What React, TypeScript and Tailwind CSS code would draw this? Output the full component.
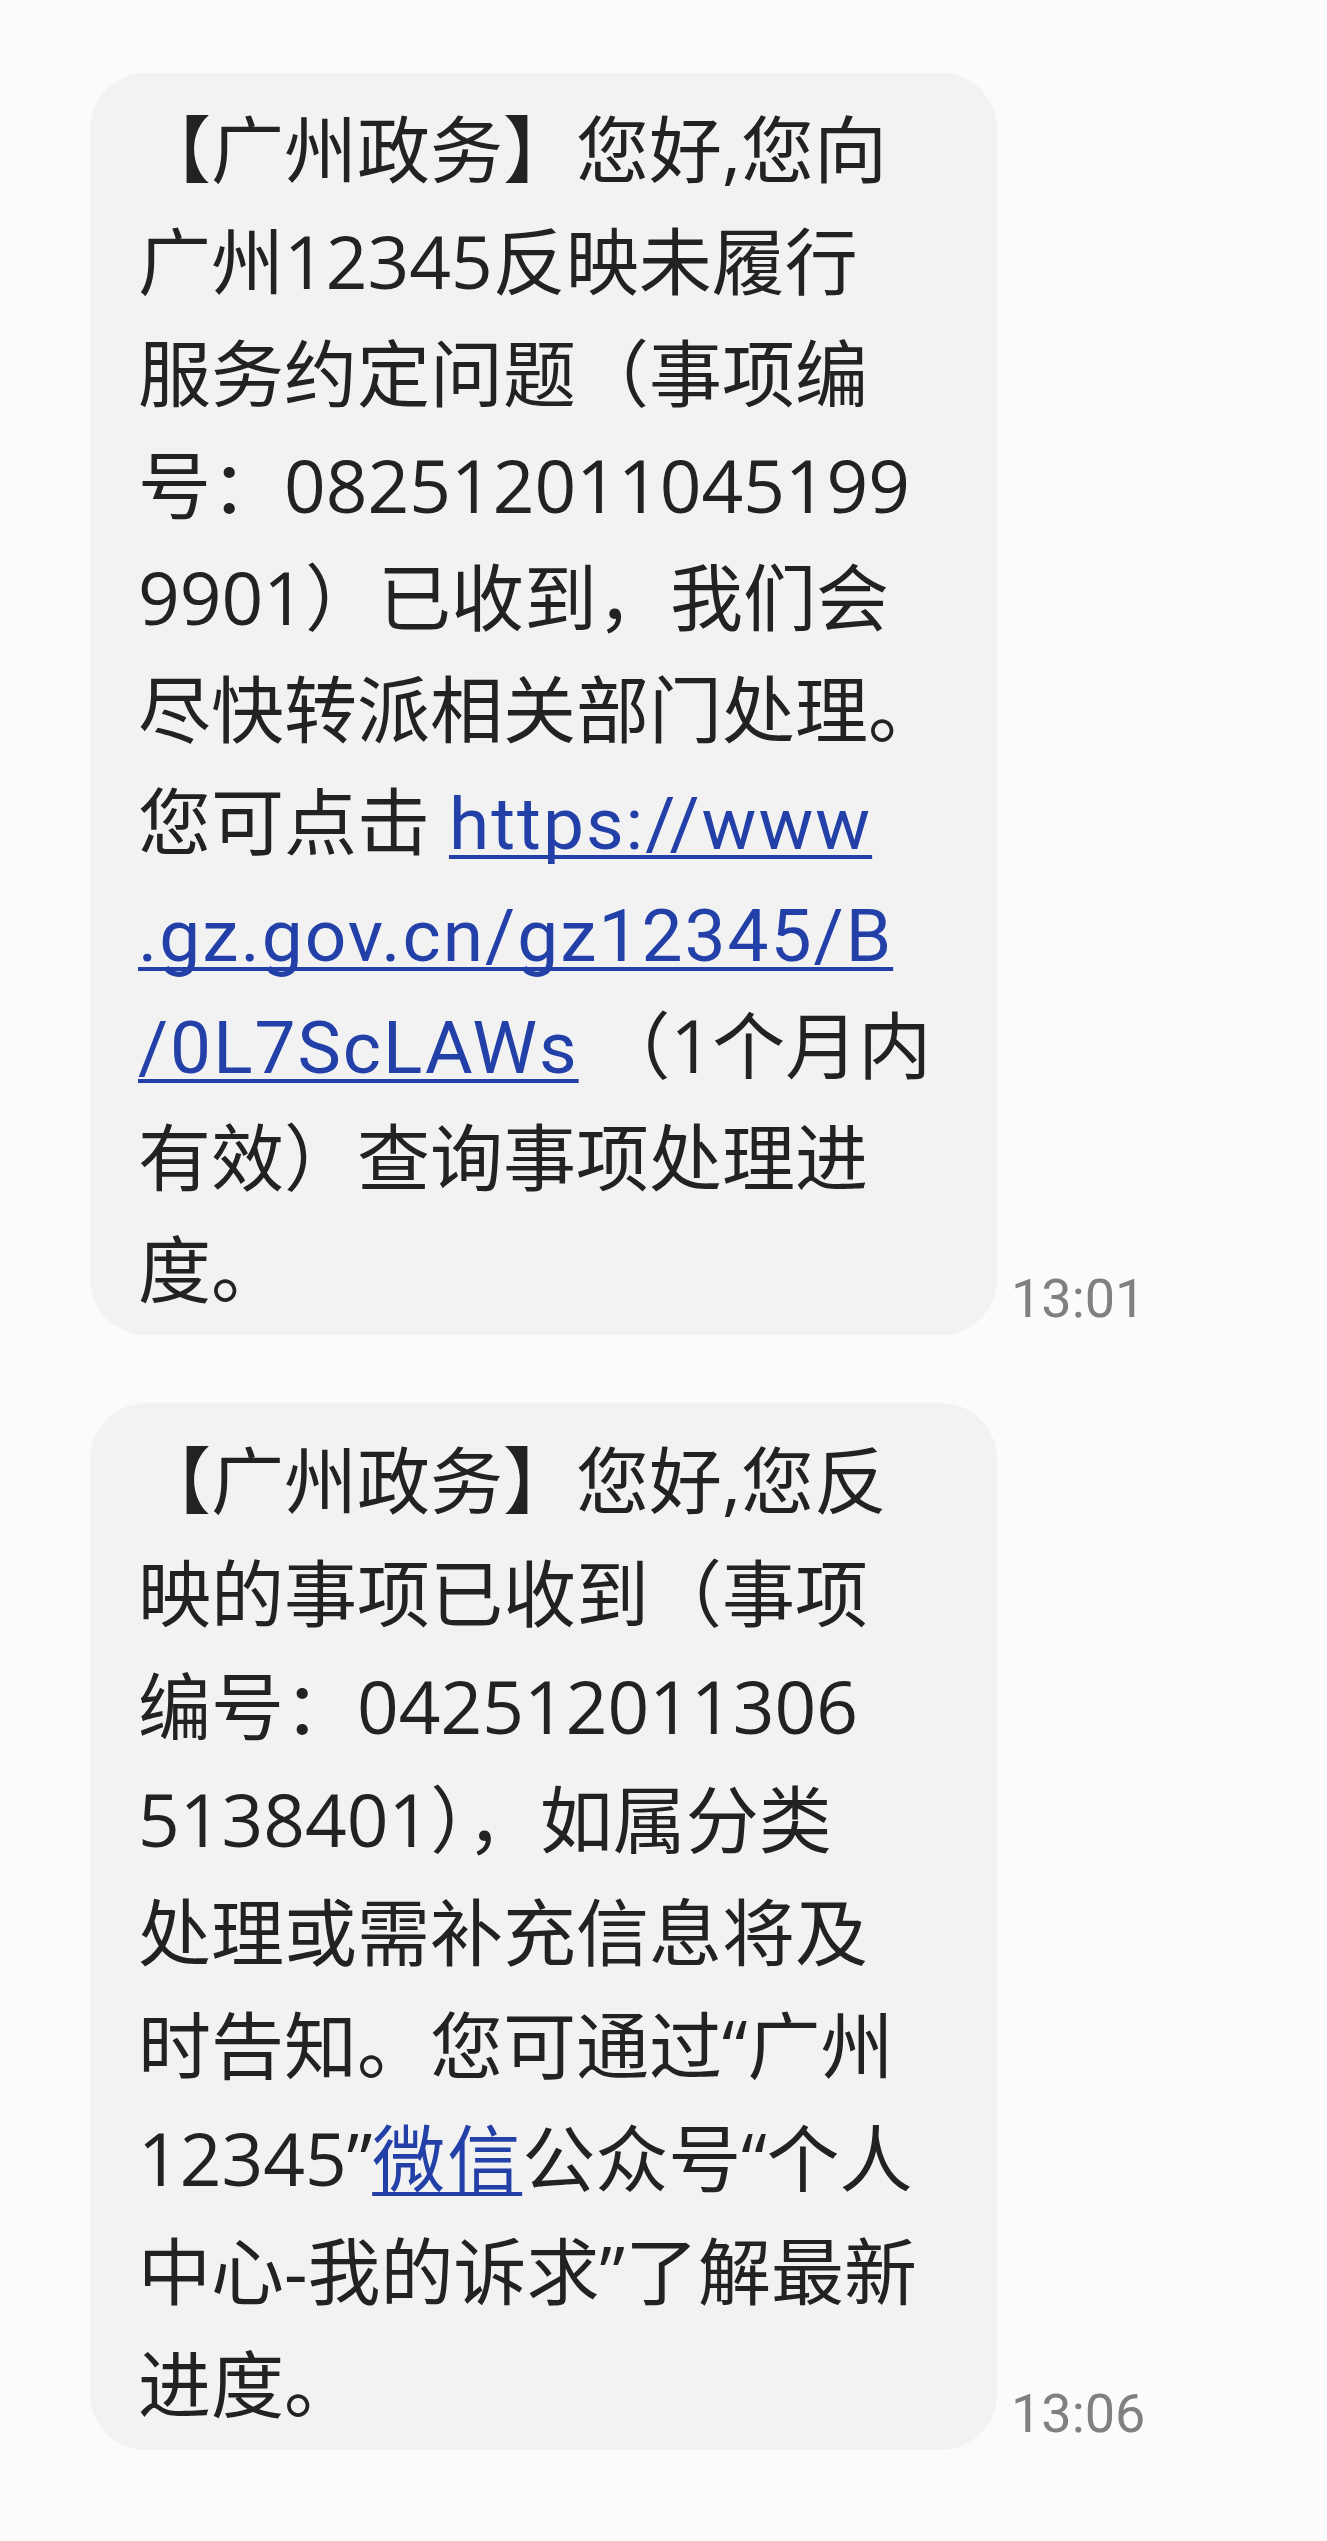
type Part = { text: string; link?: boolean };
type Line = Part[];

const t = (text: string): Part => ({ text });
const a = (text: string): Part => ({ text, link: true });

const firstMessage: Line[] = [
  [t("【广州政务】您好,您向")],
  [t("广州12345反映未履行")],
  [t("服务约定问题（事项编")],
  [t("号：082512011045199")],
  [t("9901）已收到，我们会")],
  [t("尽快转派相关部门处理。")],
  [t("您可点击 "), a("https://www")],
  [a(".gz.gov.cn/gz12345/B")],
  [a("/0L7ScLAWs"), t(" （1个月内")],
  [t("有效）查询事项处理进")],
  [t("度。")],
];

const secondMessage: Line[] = [
  [t("【广州政务】您好,您反")],
  [t("映的事项已收到（事项")],
  [t("编号：042512011306")],
  [t("5138401），如属分类")],
  [t("处理或需补充信息将及")],
  [t("时告知。您可通过“广州")],
  [t("12345”"), a("微信"), t("公众号“个人")],
  [t("中心-我的诉求”了解最新")],
  [t("进度。")],
];

interface BubbleProps {
  lines: Line[];
  time: string;
  leading: string;
}

const Bubble = ({ lines, time, leading }: BubbleProps) => {
  return (
    <div className="flex items-end">
      <div
        className={`w-[907px] rounded-[56px] bg-[#f2f2f2] pl-[48px] pr-[40px] pt-[20px] pb-[10px] text-[73px] text-[#222222] whitespace-pre font-['Open_Sans','Noto_Sans_CJK_SC',sans-serif] ${leading}`}
      >
        {lines.map((line, i) => (
          <div key={i}>
            {line.map((part, j) =>
              part.link ? (
                <span
                  key={j}
                  className="font-['Roboto','Noto_Sans_CJK_SC',sans-serif] leading-none tracking-[2px] text-[#2340a8] underline decoration-[4px] underline-offset-[6px] [text-decoration-skip-ink:none]"
                >
                  {part.text}
                </span>
              ) : (
                <span key={j}>{part.text}</span>
              )
            )}
          </div>
        ))}
      </div>
      <span className="ml-[14px] mb-[9px] font-['Roboto',sans-serif] text-[54px] leading-none text-[#808080]">
        {time}
      </span>
    </div>
  );
};

export default function App() {
  return (
    <div className="min-h-[2541px] w-[1327px] bg-[#fbfbfd] pl-[90px] pt-[73px]">
      <div className="flex flex-col gap-[68px]">
        <Bubble lines={firstMessage} time="13:01" leading="leading-[112px]" />
        <Bubble lines={secondMessage} time="13:06" leading="leading-[113px]" />
      </div>
    </div>
  );
}
